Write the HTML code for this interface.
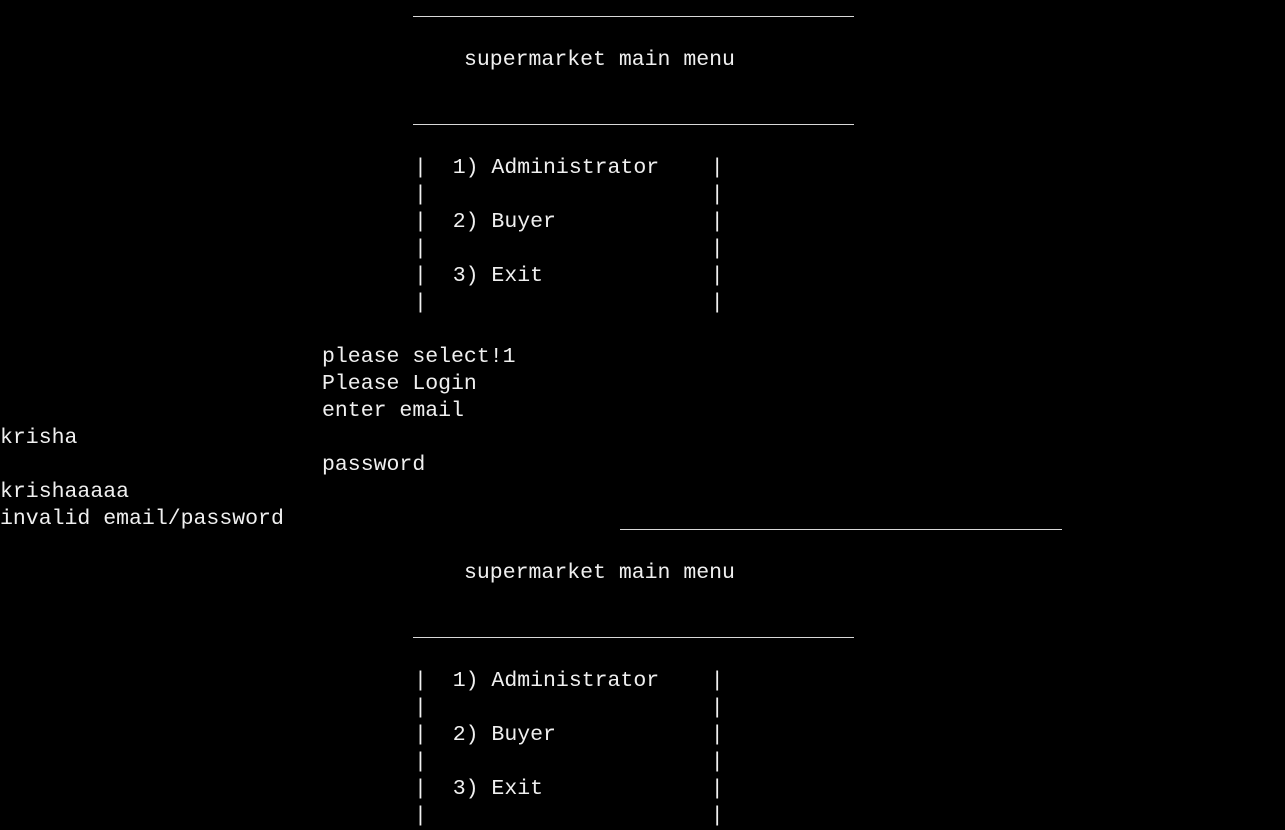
<!DOCTYPE html>
<html><head><style>
html,body{margin:0;padding:0;background:#000;width:1285px;height:823px;overflow:hidden}
.t{position:absolute;font-family:"Liberation Mono",monospace;font-size:21.5px;line-height:27px;color:#f0f0f0;white-space:pre}
.l{position:absolute;height:1px;background:#d8d8d8}
</style></head><body>
<div class="l" style="left:413px;top:16px;width:441px"></div>
<div class="t" style="left:464px;top:47px">supermarket main menu</div>
<div class="l" style="left:413px;top:124px;width:441px"></div>
<div class="t" style="left:414px;top:155px">|  1) Administrator    |
|                      |
|  2) Buyer            |
|                      |
|  3) Exit             |
|                      |</div>
<div class="t" style="left:322px;top:344px">please select!1
Please Login
enter email</div>
<div class="t" style="left:0px;top:425px">krisha</div>
<div class="t" style="left:322px;top:452px">password</div>
<div class="t" style="left:0px;top:479px">krishaaaaa
invalid email/password</div>
<div class="l" style="left:620px;top:529px;width:442px"></div>
<div class="t" style="left:464px;top:560px">supermarket main menu</div>
<div class="l" style="left:413px;top:637px;width:441px"></div>
<div class="t" style="left:414px;top:668px">|  1) Administrator    |
|                      |
|  2) Buyer            |
|                      |
|  3) Exit             |
|                      |</div>
</body></html>
